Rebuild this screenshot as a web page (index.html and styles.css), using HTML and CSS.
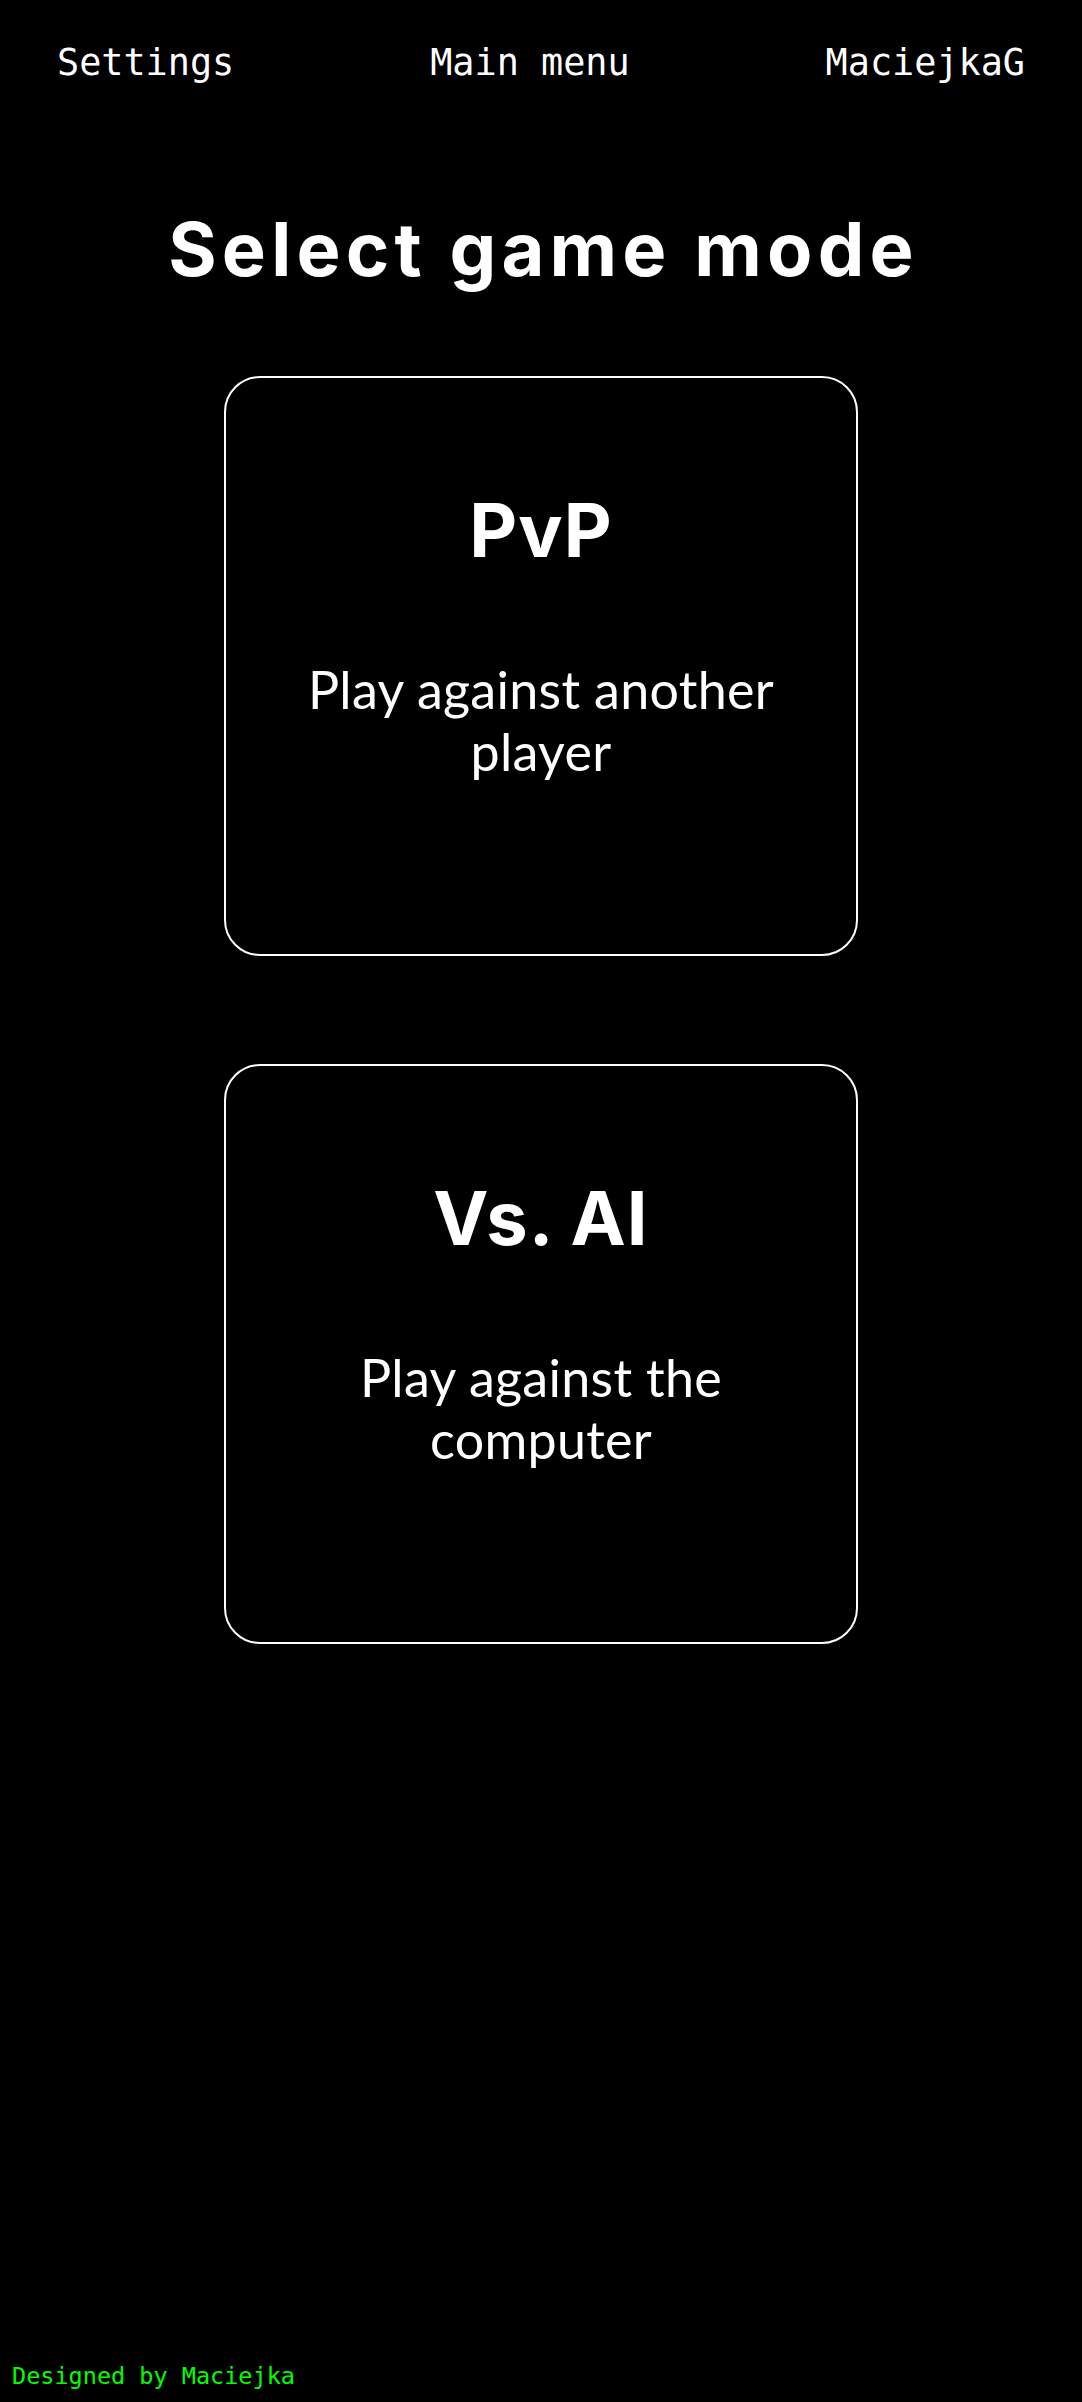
FILE: index.html
```html
<!DOCTYPE html>
<html lang="en">
<head>
<meta charset="utf-8">
<title>Select game mode</title>
<link rel="stylesheet" href="styles.css">
</head>
<body>
<div class="page">
  <nav class="topbar">
    <a class="nav-link" href="#">Settings</a>
    <a class="nav-link" href="#">Main menu</a>
    <a class="nav-link" href="#">MaciejkaG</a>
  </nav>
  <main class="content">
    <h1 class="title">Select game mode</h1>
    <div class="modes">
      <div class="mode-card">
        <h2 class="mode-title">PvP</h2>
        <p class="mode-desc">Play against another player</p>
      </div>
      <div class="mode-card">
        <h2 class="mode-title">Vs. AI</h2>
        <p class="mode-desc">Play against the computer</p>
      </div>
    </div>
  </main>
  <footer class="credit">Designed by Maciejka</footer>
</div>
</body>
</html>
```
FILE: styles.css
```css
html, body {
  margin: 0;
  padding: 0;
  background: #000;
  color: #fff;
}

.page {
  min-height: 100vh;
  display: flex;
  flex-direction: column;
}

.topbar {
  display: flex;
  justify-content: space-between;
  padding: 42px 57px 0 57px;
}

.nav-link {
  font-family: "DejaVu Sans Mono", "Liberation Mono", monospace;
  font-size: 36.8px;
  line-height: 42px;
  color: #fff;
  text-decoration: none;
}

.content {
  display: flex;
  flex-direction: column;
  align-items: center;
}

.title {
  margin: 120px -5px 0 0;
  font-family: Inter, "Open Sans", sans-serif;
  font-weight: 700;
  font-size: 74px;
  line-height: 90px;
  letter-spacing: 5.2px;
  text-align: center;
}

.modes {
  margin-top: 82px;
  display: flex;
  flex-direction: column;
  gap: 108px;
}

.mode-card {
  box-sizing: border-box;
  width: 634px;
  height: 580px;
  border: 2px solid #fff;
  border-radius: 36px;
  padding: 107px 60px 0;
  text-align: center;
}

.mode-title {
  margin: 0;
  font-family: Inter, "Open Sans", sans-serif;
  font-weight: 700;
  font-size: 74px;
  line-height: 90px;
  letter-spacing: 1px;
}

.mode-desc {
  margin: 83px 0 0;
  font-family: Lato, "Open Sans", sans-serif;
  font-weight: 400;
  font-size: 52px;
  line-height: 62.4px;
  letter-spacing: 0.3px;
}

.credit {
  margin-top: auto;
  padding: 0 0 12px 12px;
  font-family: "DejaVu Sans Mono", "Liberation Mono", monospace;
  font-size: 23.5px;
  line-height: 28px;
  color: #00ff00;
}
```
